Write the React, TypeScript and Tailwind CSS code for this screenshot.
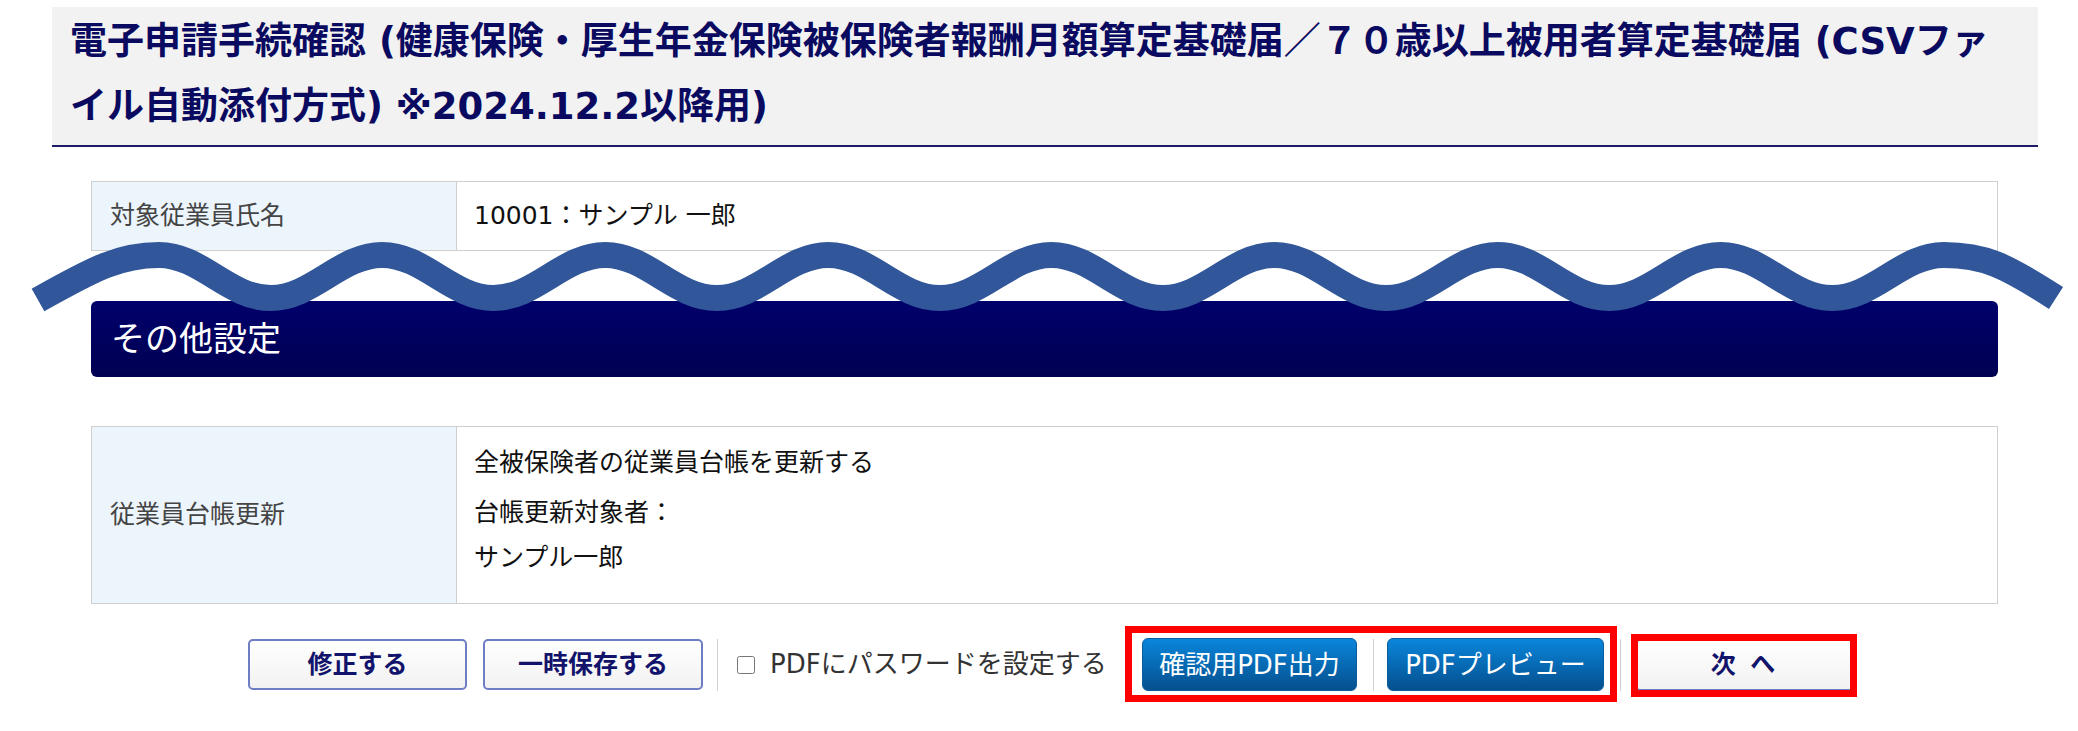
import React from "react";

const CREST_Y = 255;
const TROUGH_Y = 298;
const HALF = 111.55;

// wave drawn across the page between the first table and the section bar
function buildWave() {
  let x = 159;
  let y = CREST_Y;
  let d = `M 38 300 C 95 268 120 ${CREST_Y} ${x} ${CREST_Y}`;
  for (let i = 0; i < 16; i++) {
    const ny = y === CREST_Y ? TROUGH_Y : CREST_Y;
    const nx = x + HALF;
    d += ` C ${x + 42} ${y} ${nx - 42} ${ny} ${nx} ${ny}`;
    x = nx;
    y = ny;
  }
  d += ` C ${x + 40} ${CREST_Y} 2005 265 2056 298`;
  return d;
}

const wavePath = buildWave();

function Separator() {
  return <span className="block w-px h-[52px] bg-[#d2d2d2]" />;
}

function OutlineButton({ label, width }: { label: string; width: string }) {
  return (
    <button
      className={`${width} h-[51px] rounded-[5px] border-2 border-[#6e7ec4] bg-linear-to-b from-white to-[#f2f2f2] text-[25px] font-bold text-[#12136b] leading-none`}
    >
      {label}
    </button>
  );
}

function BlueButton({ label, width }: { label: string; width: string }) {
  return (
    <button
      className={`${width} h-[53px] rounded-[6px] border border-[#0b5c9c] bg-linear-to-b from-[#0a86dc] to-[#05508e] text-[26px] text-white leading-none`}
    >
      {label}
    </button>
  );
}

export default function App() {
  return (
    <div className="relative w-[2078px] h-[731px] bg-white overflow-hidden font-['DejaVu_Sans','Noto_Sans_CJK_JP',sans-serif]">
      {/* Page title */}
      <div className="mt-[7px] ml-[52px] mr-[40px] bg-[#f2f2f2] border-b-2 border-[#1b1b68] pl-[18px] pt-[2px] pb-[6px]">
        <h2 className="text-[37px] font-bold leading-[65px] text-[#0a0a60] whitespace-nowrap">
          電子申請手続確認 (健康保険・厚生年金保険被保険者報酬月額算定基礎届／７０歳以上被用者算定基礎届 (CSVファ
          <br />
          イル自動添付方式) ※2024.12.2以降用)
        </h2>
      </div>

      <div className="ml-[91px] w-[1907px]">
        {/* Target employee */}
        <div className="mt-[34px] flex h-[70px] border border-[#cfcfcf]">
          <div className="w-[365px] shrink-0 flex items-center bg-[#edf5fc] border-r border-[#cfcfcf] pl-[18px] text-[25px] text-[#444]">
            対象従業員氏名
          </div>
          <div className="flex items-center pl-[17px] text-[25px] text-[#111]">
            10001：サンプル 一郎
          </div>
        </div>

        {/* Section bar */}
        <div className="mt-[50px] h-[76px] rounded-[6px] bg-linear-to-b from-[#00006b] to-[#000052] flex items-center pl-[20px] text-[34px] text-white">
          その他設定
        </div>

        {/* Ledger update */}
        <div className="mt-[49px] flex h-[178px] border border-[#cfcfcf]">
          <div className="w-[365px] shrink-0 flex items-center bg-[#edf5fc] border-r border-[#cfcfcf] pl-[18px] text-[25px] text-[#444]">
            従業員台帳更新
          </div>
          <div className="pl-[17px] pt-[21px] text-[25px] text-[#111]">
            <p className="leading-[30px]">全被保険者の従業員台帳を更新する</p>
            <div className="mt-[12px] leading-[45px]">
              <p>台帳更新対象者：</p>
              <p>サンプル一郎</p>
            </div>
          </div>
        </div>

        {/* Actions */}
        <div className="mt-[34px] pl-[157px] flex items-center">
          <OutlineButton label="修正する" width="w-[219px]" />
          <div className="ml-[16px]">
            <OutlineButton label="一時保存する" width="w-[220px]" />
          </div>
          <div className="ml-[14px]">
            <Separator />
          </div>
          <label className="ml-[19px] flex items-center w-[376px] text-[26px] text-[#333] whitespace-nowrap">
            <input type="checkbox" className="w-[18px] h-[18px] accent-[#555]" />
            <span className="ml-[15px]">PDFにパスワードを設定する</span>
          </label>
          <div className="ml-[12px]">
            <Separator />
          </div>
          <div className="relative ml-[16px] flex items-center">
            <BlueButton label="確認用PDF出力" width="w-[215px]" />
            <div className="ml-[16px]">
              <Separator />
            </div>
            <div className="ml-[13px]">
              <BlueButton label="PDFプレビュー" width="w-[217px]" />
            </div>
            <div className="absolute -left-[17px] -right-[13px] -top-[12px] -bottom-[11px] border-[7px] border-[#ff0000]" />
          </div>
          <div className="ml-[16px]">
            <Separator />
          </div>
          <div className="relative ml-[14px]">
            <button className="w-[219px] h-[52px] rounded-[5px] border-2 border-[#6e7ec4] bg-linear-to-b from-white to-[#f2f2f2] text-[25px] font-bold text-[#12136b] leading-none tracking-[3px]">
              次 へ
            </button>
            <div className="absolute -left-[4px] -right-[3px] -top-[5px] -bottom-[6px] border-[7px] border-[#ff0000]" />
          </div>
        </div>
      </div>

      {/* wave overlay */}
      <svg
        className="absolute left-0 top-0 pointer-events-none"
        width={2078}
        height={731}
        viewBox="0 0 2078 731"
      >
        <path d={wavePath} fill="none" stroke="#31579a" strokeWidth={26} />
      </svg>
    </div>
  );
}
